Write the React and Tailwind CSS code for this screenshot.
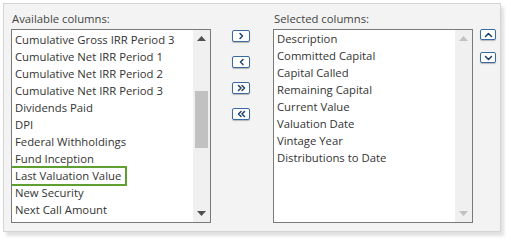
const available = [
  "Cumulative Gross IRR Period 3",
  "Cumulative Net IRR Period 1",
  "Cumulative Net IRR Period 2",
  "Cumulative Net IRR Period 3",
  "Dividends Paid",
  "DPI",
  "Federal Withholdings",
  "Fund Inception",
  "Last Valuation Value",
  "New Security",
  "Next Call Amount",
];

const selected = [
  "Description",
  "Committed Capital",
  "Capital Called",
  "Remaining Capital",
  "Current Value",
  "Valuation Date",
  "Vintage Year",
  "Distributions to Date",
];

function Chevron({ dir, double }) {
  const paths = {
    right: ["M4 2.5 L6.5 5 L4 7.5"],
    left: ["M7 2.5 L4.5 5 L7 7.5"],
    up: ["M2.5 6.5 L5.5 3.5 L8.5 6.5"],
    down: ["M2.5 3.5 L5.5 6.5 L8.5 3.5"],
  };
  const dbl = {
    right: ["M2.5 2.5 L5 5 L2.5 7.5", "M6 2.5 L8.5 5 L6 7.5"],
    left: ["M5 2.5 L2.5 5 L5 7.5", "M8.5 2.5 L6 5 L8.5 7.5"],
  };
  const d = double ? dbl[dir] : paths[dir];
  return (
    <svg width="11" height="10" viewBox="0 0 11 10" fill="none">
      {d.map((p) => (
        <path key={p} d={p} stroke="#1d3f6b" strokeWidth="1.5" strokeLinecap="round" strokeLinejoin="round" />
      ))}
    </svg>
  );
}

function MoveButton({ dir, double, small }) {
  return (
    <div
      className={`flex items-center justify-center rounded-[2px] border border-[#3a6aa0] bg-white shadow-[0_1px_1px_rgba(0,0,0,0.25)] ${
        small ? "w-[16px] h-[11px]" : "w-[18px] h-[12px]"
      }`}
    >
      <Chevron dir={dir} double={double} />
    </div>
  );
}

function ListBox({ label, items, scrolled, disabled }) {
  return (
    <div className="flex flex-col w-[200px]">
      <div className="h-[16px] leading-[16px] text-[11.3px] text-[#444] mb-[2px] pl-[1px]">{label}</div>
      <div className="relative h-[194px] border border-[#7a7a7a] bg-white overflow-hidden flex">
        <div className={`flex-1 overflow-hidden ${scrolled ? "pt-[1px]" : "pt-0"}`}>
          {items.map((item) => (
            <div
              key={item}
              className={`h-[17px] leading-[17px] text-[11.3px] text-[#333] pl-[3px] whitespace-nowrap ${
                item === "Last Valuation Value" ? "relative" : ""
              }`}
            >
              {item}
              {item === "Last Valuation Value" && (
                <div className="absolute left-[-2px] top-[-1px] w-[117px] h-[20px] border-2 border-[#5e9f32]" />
              )}
            </div>
          ))}
        </div>
        <div className="w-[17px] bg-[#f0f0f0] flex flex-col items-center">
          <div className="h-[17px] flex items-center justify-center">
            <svg width="9" height="5" viewBox="0 0 9 5">
              <path d="M0 5 L4.5 0 L9 5 Z" fill={disabled ? "#c2c2c2" : "#505050"} />
            </svg>
          </div>
          <div className="flex-1 w-full px-[2px] pt-[44px] pb-[57px]">
            {!disabled && <div className="w-full h-full bg-[#c1c1c1]" />}
          </div>
          <div className="h-[17px] flex items-center justify-center">
            <svg width="9" height="5" viewBox="0 0 9 5">
              <path d="M0 0 L4.5 5 L9 0 Z" fill={disabled ? "#c2c2c2" : "#505050"} />
            </svg>
          </div>
        </div>
      </div>
    </div>
  );
}

export default function App() {
  return (
    <div className="w-[511px] h-[244px] bg-white pt-[3px] pl-[3px]" style={{ fontFamily: '"Open Sans", "Noto Sans", sans-serif' }}>
      <div className="w-[498px] h-[229px] border border-[#d4d4d4] bg-[#f3f3f3] shadow-[3px_4px_3px_rgba(0,0,0,0.12)] flex pl-[7px] pt-[7px]">
        <ListBox label="Available columns:" items={available} scrolled />
        <div className="flex flex-col gap-[14px] pt-[19px] ml-[21px] mr-[23px]">
          <MoveButton dir="right" />
          <MoveButton dir="left" />
          <MoveButton dir="right" double />
          <MoveButton dir="left" double />
        </div>
        <ListBox label="Selected columns:" items={selected} disabled />
        <div className="flex flex-col gap-[12px] pt-[18px] ml-[7px]">
          <MoveButton dir="up" small />
          <MoveButton dir="down" small />
        </div>
      </div>
    </div>
  );
}
